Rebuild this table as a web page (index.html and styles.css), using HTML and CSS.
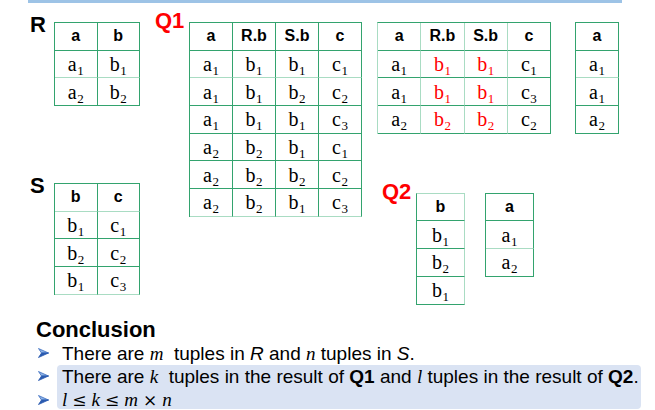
FILE: index.html
```html
<!DOCTYPE html>
<html>
<head>
<meta charset="utf-8">
<link rel="stylesheet" href="styles.css">
</head>
<body>
<div class="topbar"></div>
<div class="stage">
  <div class="col-left">
    <div class="block">
      <div class="label">R</div>
      <table class="w86">
        <tr><th>a</th><th>b</th></tr>
        <tr class="lt"><td>a<span class="sub">1</span></td><td>b<span class="sub">1</span></td></tr>
        <tr><td>a<span class="sub">2</span></td><td>b<span class="sub">2</span></td></tr>
      </table>
    </div>
    <div class="block block-s">
      <div class="label">S</div>
      <table class="w86">
        <tr class="lt"><th>b</th><th>c</th></tr>
        <tr><td>b<span class="sub">1</span></td><td>c<span class="sub">1</span></td></tr>
        <tr><td>b<span class="sub">2</span></td><td>c<span class="sub">2</span></td></tr>
        <tr class="lt"><td>b<span class="sub">1</span></td><td>c<span class="sub">3</span></td></tr>
      </table>
    </div>
  </div>

  <div class="block block-q1">
    <div class="label q">Q1</div>
    <table class="w173">
      <tr><th>a</th><th>R.b</th><th>S.b</th><th>c</th></tr>
      <tr class="lt"><td>a<span class="sub">1</span></td><td>b<span class="sub">1</span></td><td>b<span class="sub">1</span></td><td>c<span class="sub">1</span></td></tr>
      <tr><td>a<span class="sub">1</span></td><td>b<span class="sub">1</span></td><td>b<span class="sub">2</span></td><td>c<span class="sub">2</span></td></tr>
      <tr><td>a<span class="sub">1</span></td><td>b<span class="sub">1</span></td><td>b<span class="sub">1</span></td><td>c<span class="sub">3</span></td></tr>
      <tr><td>a<span class="sub">2</span></td><td>b<span class="sub">2</span></td><td>b<span class="sub">1</span></td><td>c<span class="sub">1</span></td></tr>
      <tr><td>a<span class="sub">2</span></td><td>b<span class="sub">2</span></td><td>b<span class="sub">2</span></td><td>c<span class="sub">2</span></td></tr>
      <tr class="lt"><td>a<span class="sub">2</span></td><td>b<span class="sub">2</span></td><td>b<span class="sub">1</span></td><td>c<span class="sub">3</span></td></tr>
    </table>
  </div>

  <div class="col-right">
    <div class="row-top">
      <table class="w174 soft">
        <tr><th>a</th><th>R.b</th><th>S.b</th><th>c</th></tr>
        <tr><td>a<span class="sub">1</span></td><td class="red">b<span class="sub">1</span></td><td class="red">b<span class="sub">1</span></td><td>c<span class="sub">1</span></td></tr>
        <tr><td>a<span class="sub">1</span></td><td class="red">b<span class="sub">1</span></td><td class="red">b<span class="sub">1</span></td><td>c<span class="sub">3</span></td></tr>
        <tr><td>a<span class="sub">2</span></td><td class="red">b<span class="sub">2</span></td><td class="red">b<span class="sub">2</span></td><td>c<span class="sub">2</span></td></tr>
      </table>
      <table class="w44 t4">
        <tr><th>a</th></tr>
        <tr class="lt"><td>a<span class="sub">1</span></td></tr>
        <tr><td>a<span class="sub">1</span></td></tr>
        <tr><td>a<span class="sub">2</span></td></tr>
      </table>
    </div>
    <div class="block block-q2">
      <div class="label q">Q2</div>
      <table class="w49 softright">
        <tr><th>b</th></tr>
        <tr><td>b<span class="sub">1</span></td></tr>
        <tr><td>b<span class="sub">2</span></td></tr>
        <tr><td>b<span class="sub">1</span></td></tr>
      </table>
      <table class="w49 t-a2">
        <tr><th>a</th></tr>
        <tr class="lt"><td>a<span class="sub">1</span></td></tr>
        <tr><td>a<span class="sub">2</span></td></tr>
      </table>
    </div>
  </div>
</div>

<div class="conclusion">
  <h2>Conclusion</h2>
  <div class="items">
    <div class="item">
      <svg class="arrow" viewBox="0 0 11 10"><polygon points="0.5,0.5 10.5,5 3.5,5" fill="#8eb3e6" stroke="#3d6fc0" stroke-width="0.8" stroke-linejoin="round"/><polygon points="3.5,5 10.5,5 0.5,9.5" fill="#2b5bb0" stroke="#2b5bb0" stroke-width="0.8" stroke-linejoin="round"/></svg>
      <span>There are <i class="m">m</i>&nbsp; tuples in <i>R</i> and <i class="m">n</i> tuples in <i>S</i>.</span>
    </div>
    <div class="hl">
      <div class="item">
        <svg class="arrow" viewBox="0 0 11 10"><polygon points="0.5,0.5 10.5,5 3.5,5" fill="#8eb3e6" stroke="#3d6fc0" stroke-width="0.8" stroke-linejoin="round"/><polygon points="3.5,5 10.5,5 0.5,9.5" fill="#2b5bb0" stroke="#2b5bb0" stroke-width="0.8" stroke-linejoin="round"/></svg>
        <span>There are <i class="m">k</i>&nbsp; tuples in the result of <b>Q1</b> and <i class="m">l</i> tuples in the result of <b>Q2</b>.</span>
      </div>
      <div class="item">
        <svg class="arrow" viewBox="0 0 11 10"><polygon points="0.5,0.5 10.5,5 3.5,5" fill="#8eb3e6" stroke="#3d6fc0" stroke-width="0.8" stroke-linejoin="round"/><polygon points="3.5,5 10.5,5 0.5,9.5" fill="#2b5bb0" stroke="#2b5bb0" stroke-width="0.8" stroke-linejoin="round"/></svg>
        <span class="math"><i>l</i><span class="op">≤</span><i>k</i><span class="op">≤</span><i>m</i><span class="op">×</span><i>n</i></span>
      </div>
    </div>
  </div>
</div>
</body>
</html>
```

FILE: styles.css
```css
* { box-sizing: border-box; }

body {
  margin: 0;
  width: 655px;
  height: 410px;
  overflow: hidden;
  background: #ffffff;
  color: #000000;
  font-family: "Liberation Sans", Arial, sans-serif;
}

.topbar {
  margin-left: 28px;
  width: 594px;
  height: 3px;
  background: #9dc3e6;
}

.stage {
  display: flex;
  align-items: flex-start;
  padding-top: 19px;
  padding-left: 30px;
}

.col-left {
  display: flex;
  flex-direction: column;
}

.block {
  display: flex;
  align-items: flex-start;
}

.block-s { margin-top: 77px; }
.block-q1 { margin-left: 15px; }

.col-right {
  margin-left: 15px;
  display: flex;
  flex-direction: column;
}

.row-top {
  display: flex;
  align-items: flex-start;
  gap: 24px;
}

.block-q2 {
  margin-top: 59px;
  margin-left: 5px;
}

.block-q2 table + table { margin-left: 20px; }

.label {
  font-weight: bold;
  font-size: 22px;
  line-height: 22px;
  width: 24px;
  margin-top: -8px;
  flex: none;
}

.label.q {
  color: #ff0000;
  width: 34px;
  margin-top: -12px;
}

/* tables */
table {
  border-collapse: separate;
  border-spacing: 0;
  table-layout: fixed;
  border-top: 1px solid #33a36e;
  border-left: 1px solid #33a36e;
  flex: none;
}

.w86 { width: 86px; }
.w173 { width: 173px; }
.w174 { width: 174px; }
.w44 { width: 44px; }
.w49 { width: 49px; }

th, td {
  height: 27.7px;
  padding: 0;
  text-align: center;
  vertical-align: middle;
  border-right: 1px solid #33a36e;
  border-bottom: 1px solid #33a36e;
  white-space: nowrap;
}

th {
  font-family: "Liberation Sans", Arial, sans-serif;
  font-weight: bold;
  font-size: 16px;
  line-height: 16px;
}

td {
  font-family: "Liberation Serif", "Times New Roman", serif;
  font-size: 20px;
  line-height: 20px;
}

.sub {
  font-size: 13px;
  line-height: 0;
  position: relative;
  top: 4px;
  margin-left: 0.5px;
}

tr.lt > td, tr.lt > th { border-bottom-color: #a9dcc3; }

.soft { border-left-color: #a9dcc3; }
.soft th:not(:last-child), .soft td:not(:last-child) { border-right-color: #a9dcc3; }
.softright th, .softright td { border-right-color: #a9dcc3; }
.softright { border-top-color: #a9dcc3; }

.red { color: #ff0000; }

/* conclusion */
.conclusion { margin-top: 13px; }

.conclusion h2 {
  margin: 0;
  padding-left: 36px;
  font-size: 22px;
  line-height: 24px;
  font-weight: bold;
}

.items {
  padding-left: 38px;
  font-size: 19px;
  line-height: 23px;
}

.item {
  display: flex;
  align-items: center;
  white-space: nowrap;
}

.arrow {
  width: 11px;
  height: 10px;
  margin-right: 13px;
  flex: none;
}

.item i { font-style: italic; }

.m, .math {
  font-family: "Liberation Serif", "Times New Roman", serif;
}

.math i { font-style: italic; }

.op {
  margin: 0 5px;
  font-family: "DejaVu Serif", "Liberation Serif", serif;
  font-size: 17px;
}

.hl {
  margin-left: 19px;
  width: 584px;
  height: 44px;
  background: #dae3f3;
  border-radius: 4px;
}

.hl .item { margin-left: -19px; }
```
